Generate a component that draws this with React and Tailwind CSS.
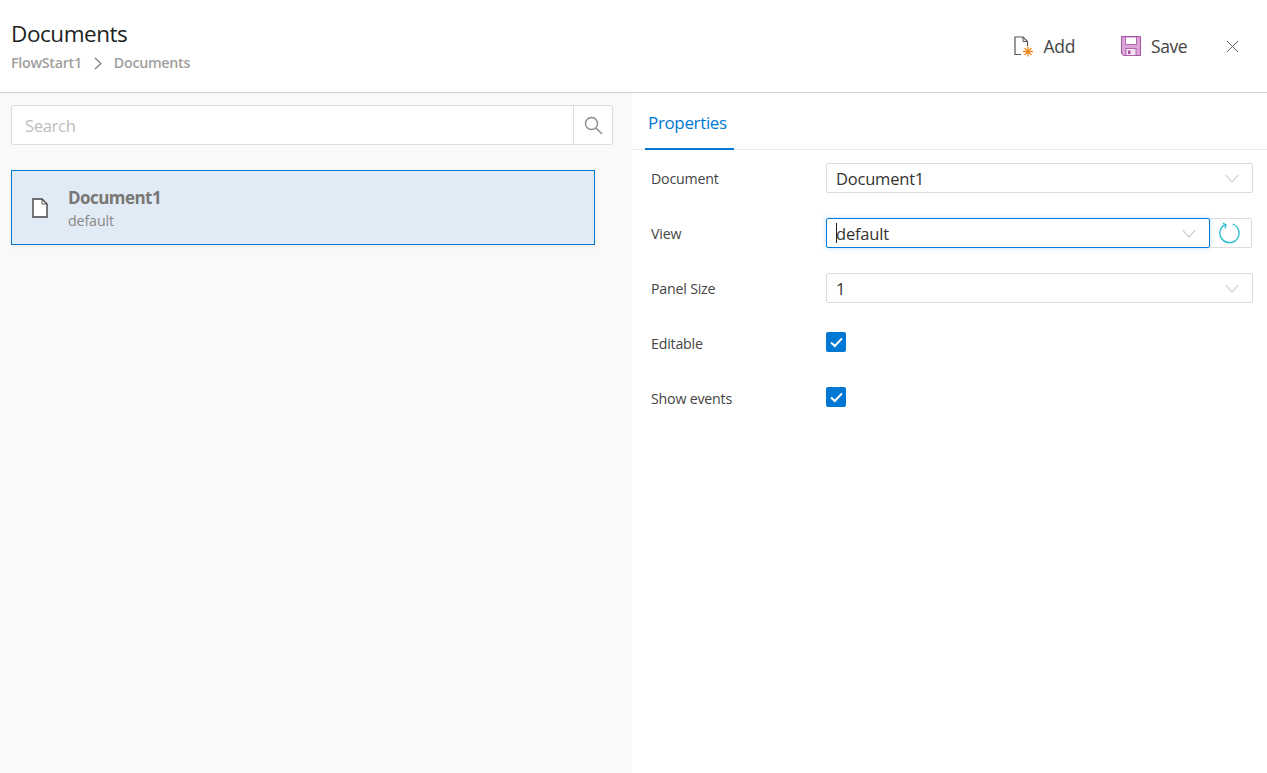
import React from "react";

const font = { fontFamily: '"Open Sans", "Noto Sans", sans-serif' };

const Chevron = () => (
  <svg width="14" height="9" viewBox="0 0 14 9" fill="none" stroke="#c4c4c4" strokeWidth="1.1">
    <path d="M0.7 1 L7 8 L13.3 1" />
  </svg>
);

const Check = () => (
  <span className="mb-[2px] flex h-5 w-5 items-center justify-center rounded-[2px] bg-[#0078d4]">
    <svg width="13" height="11" viewBox="0 0 13 11" fill="none" stroke="#fff" strokeWidth="2">
      <path d="M1 5.5 L4.8 9 L12 1.4" />
    </svg>
  </span>
);

const Select = ({ value, focused }) => (
  <div
    className={`flex h-[30px] flex-1 items-center justify-between rounded-[2px] border bg-white pl-[9px] pr-[13px] text-[16.5px] text-[#333] ${
      focused ? "border-[#0078d4] shadow-[0_0_4px_rgba(0,120,212,0.25)]" : "border-[#dcdcdc]"
    }`}
  >
    <span className="relative pt-[2px] tracking-[-0.2px]">
      {focused && <span className="absolute left-0 top-[3px] h-[20px] w-px bg-[#222]" />}
      {value}
    </span>
    <Chevron />
  </div>
);

const Row = ({ label, children }) => (
  <div className="flex h-[30px] items-center">
    <div className="w-[175px] pt-[2px] text-[14.2px] tracking-[-0.2px] text-[#444]">{label}</div>
    <div className="flex flex-1 items-center">{children}</div>
  </div>
);

export default function App() {
  return (
    <div className="flex h-[773px] flex-col overflow-hidden bg-white" style={font}>
      {/* header */}
      <header className="flex h-[93px] shrink-0 items-start justify-between border-b border-[#d2d0ce] pl-[11px] pr-[28px]">
        <div className="pt-[19px]">
          <h1 className="text-[22.5px] font-medium leading-[30px] tracking-[-0.45px] text-[#201f1e]">Documents</h1>
          <div className="mt-[4px] flex items-center text-[14.3px] font-semibold leading-[20px] tracking-[-0.3px] text-[#a19f9d]">
            <span>FlowStart1</span>
            <svg className="ml-[12px] mr-[12px]" width="8" height="13" viewBox="0 0 8 13" fill="none" stroke="#777" strokeWidth="1.1">
              <path d="M1 1 L7 6.5 L1 12" />
            </svg>
            <span>Documents</span>
          </div>
        </div>
        <div className="flex items-center pt-[35px] text-[17.5px] leading-[22px] tracking-[-0.3px] text-[#444]">
          <svg width="20" height="21" viewBox="0 0 20 21" fill="none">
            <path d="M7 18.5 H1 V1 H9 L13.5 5.5 V10" stroke="#555" strokeWidth="1.2" />
            <path d="M9 1 V5.5 H13.5" stroke="#555" strokeWidth="1" />
            <path d="M14 10.5 V20.5 M9 15.5 H19 M10.5 12 L17.5 19 M17.5 12 L10.5 19" stroke="#f08a24" strokeWidth="1.3" />
          </svg>
          <span className="ml-[10px]">Add</span>
          <svg className="ml-[46px]" width="20" height="20" viewBox="0 0 20 20">
            <path d="M0.5 0.5 H19.5 V19.5 H2.5 L0.5 17.5 Z" fill="#d9a6d6" stroke="#a94fa5" />
            <rect x="4.5" y="1" width="11" height="7.5" fill="#fff" stroke="#a94fa5" strokeWidth="0.8" />
            <rect x="5" y="12.5" width="10" height="7" fill="#f3e6f2" stroke="#a94fa5" strokeWidth="0.8" />
            <rect x="7" y="14.5" width="2.5" height="3.5" fill="#a94fa5" />
          </svg>
          <span className="ml-[10px] tracking-[-0.5px]">Save</span>
          <svg className="ml-[39px]" width="13" height="13" viewBox="0 0 13 13" fill="none" stroke="#666" strokeWidth="1">
            <path d="M1 1 L12 12 M12 1 L1 12" />
          </svg>
        </div>
      </header>

      <div className="flex flex-1">
        {/* left list */}
        <aside className="w-[632px] shrink-0 bg-[#faf9f8] pl-[11px] pr-[19px] pt-[12px]">
          <div className="flex h-[40px] rounded-[2px] border border-[#dcdcdc] bg-white">
            <div className="flex flex-1 items-center pl-[13px] pt-[2px] text-[16.5px] tracking-[-0.3px] text-[#bdbdbd]">Search</div>
            <div className="flex w-[39px] items-center justify-center border-l border-[#dcdcdc]">
              <svg width="19" height="19" viewBox="0 0 19 19" fill="none" stroke="#8a8a8a" strokeWidth="1.4">
                <circle cx="7.5" cy="7.5" r="6" />
                <path d="M12 12 L18 18" />
              </svg>
            </div>
          </div>
          <div className="mt-[25px] mr-[18px] flex h-[75px] items-center border border-[#0078d4] bg-[#e1ebf5] shadow-[0_2px_4px_rgba(0,0,0,0.05)]">
            <svg className="ml-[20px]" width="16" height="20" viewBox="0 0 16 20" fill="#fff" stroke="#444" strokeWidth="1.4">
              <path d="M1 1 H10 L15 6 V19 H1 Z" />
              <path d="M10 1 V6 H15" fill="none" strokeWidth="0.9" />
            </svg>
            <div className="ml-[20px] pt-[2px]">
              <div className="text-[17px] font-bold leading-[23px] tracking-[-0.55px] text-[#797775]">Document1</div>
              <div className="pt-[2px] text-[14.2px] leading-[20px] tracking-[-0.1px] text-[#8a8886]">default</div>
            </div>
          </div>
        </aside>

        {/* right properties */}
        <main className="flex-1">
          <div className="border-b border-[#edebe9] pl-[13px]">
            <div className="-mb-px h-[57px] w-[89px] border-b-2 border-[#0078d4] pl-[3px] pt-[17px] text-[17px] leading-[26px] tracking-[-0.35px] text-[#0078d4]">
              Properties
            </div>
          </div>
          <div className="flex flex-col gap-[25px] pl-[19px] pr-[14px] pt-[13px]">
            <Row label="Document">
              <Select value="Document1" />
            </Row>
            <Row label="View">
              <Select value="default" focused />
              <div className="mr-px flex h-[30px] w-[42px] items-center justify-center rounded-r-[2px] border border-l-0 border-[#dcdcdc] pr-[3px]">
                <svg width="22" height="22" viewBox="0 0 22 22" fill="none" stroke="#22b8cf" strokeWidth="1.3">
                  <path d="M7 2.6 A9.6 9.6 0 1 0 14.5 2" />
                  <path d="M5 1 L8 3 L7 6.4" />
                </svg>
              </div>
            </Row>
            <Row label="Panel Size">
              <Select value="1" />
            </Row>
            <Row label="Editable">
              <Check />
            </Row>
            <Row label="Show events">
              <Check />
            </Row>
          </div>
        </main>
      </div>
    </div>
  );
}
